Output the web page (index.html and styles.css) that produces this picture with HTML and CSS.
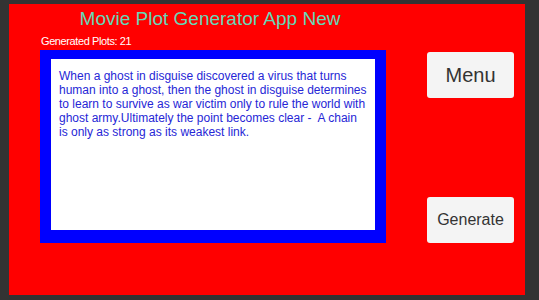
FILE: index.html
```html
<!DOCTYPE html>
<html lang="en">
<head>
  <meta charset="UTF-8">
  <meta name="viewport" content="width=device-width, initial-scale=1.0">
  <title>Movie Plot Generator App New</title>
  <link rel="stylesheet" href="styles.css">
</head>
<body>
  <div class="screen">
    <!-- Left side: title, counter and plot box -->
    <div class="main">
      <h1 class="title">Movie Plot Generator App New</h1>
      <p class="counter">Generated Plots: 21</p>
      <div class="plot-frame">
        <div class="plot">
          When a ghost in disguise discovered a virus that turns human into a ghost, then the ghost in disguise determines to learn to survive as war victim only to rule the world with ghost army.Ultimately the point becomes clear -&nbsp; A chain is only as strong as its weakest link.
        </div>
      </div>
    </div>

    <!-- Right side: buttons -->
    <div class="side">
      <button class="btn btn-menu">Menu</button>
      <button class="btn btn-generate">Generate</button>
    </div>
  </div>
</body>
</html>
```

FILE: styles.css
```css
html, body {
  margin: 0;
  padding: 0;
  background: #333333;
  font-family: "Liberation Sans", Arial, sans-serif;
}
.screen {
  display: flex;
  margin: 4px 14px 0 9px;
  height: 291px;
  background: #ff0000;
  padding-left: 31px;
  box-sizing: border-box;
}
.main {
  width: 346px;
  display: flex;
  flex-direction: column;
}
.title {
  margin: 4px 0 0 0;
  font-size: 19px;
  line-height: 22px;
  font-weight: normal;
  color: #66d8b8;
  text-align: center;
  padding-right: 6px;
}
.counter {
  margin: 5px 0 0 1px;
  font-size: 11px;
  line-height: 12px;
  color: #ffffff;
  letter-spacing: -0.4px;
}
.plot-frame {
  margin-top: 3px;
  background: #0000ff;
  padding: 9px 11px 13px 11px;
  height: 193px;
  box-sizing: border-box;
}
.plot {
  background: #ffffff;
  height: 100%;
  box-sizing: border-box;
  padding: 10px 8px;
  font-size: 12px;
  line-height: 14px;
  color: #2626d6;
}
.side {
  margin-left: 41px;
  width: 87px;
  display: flex;
  flex-direction: column;
  justify-content: space-between;
  padding: 48px 0 52px 0;
  box-sizing: border-box;
}
.btn {
  width: 87px;
  height: 46px;
  border: none;
  border-radius: 3px;
  background: #f4f4f4;
  color: #333333;
  font-family: "Liberation Sans", Arial, sans-serif;
  padding: 0;
  cursor: pointer;
}
.btn-menu {
  font-size: 20px;
}
.btn-generate {
  font-size: 16px;
}
```
